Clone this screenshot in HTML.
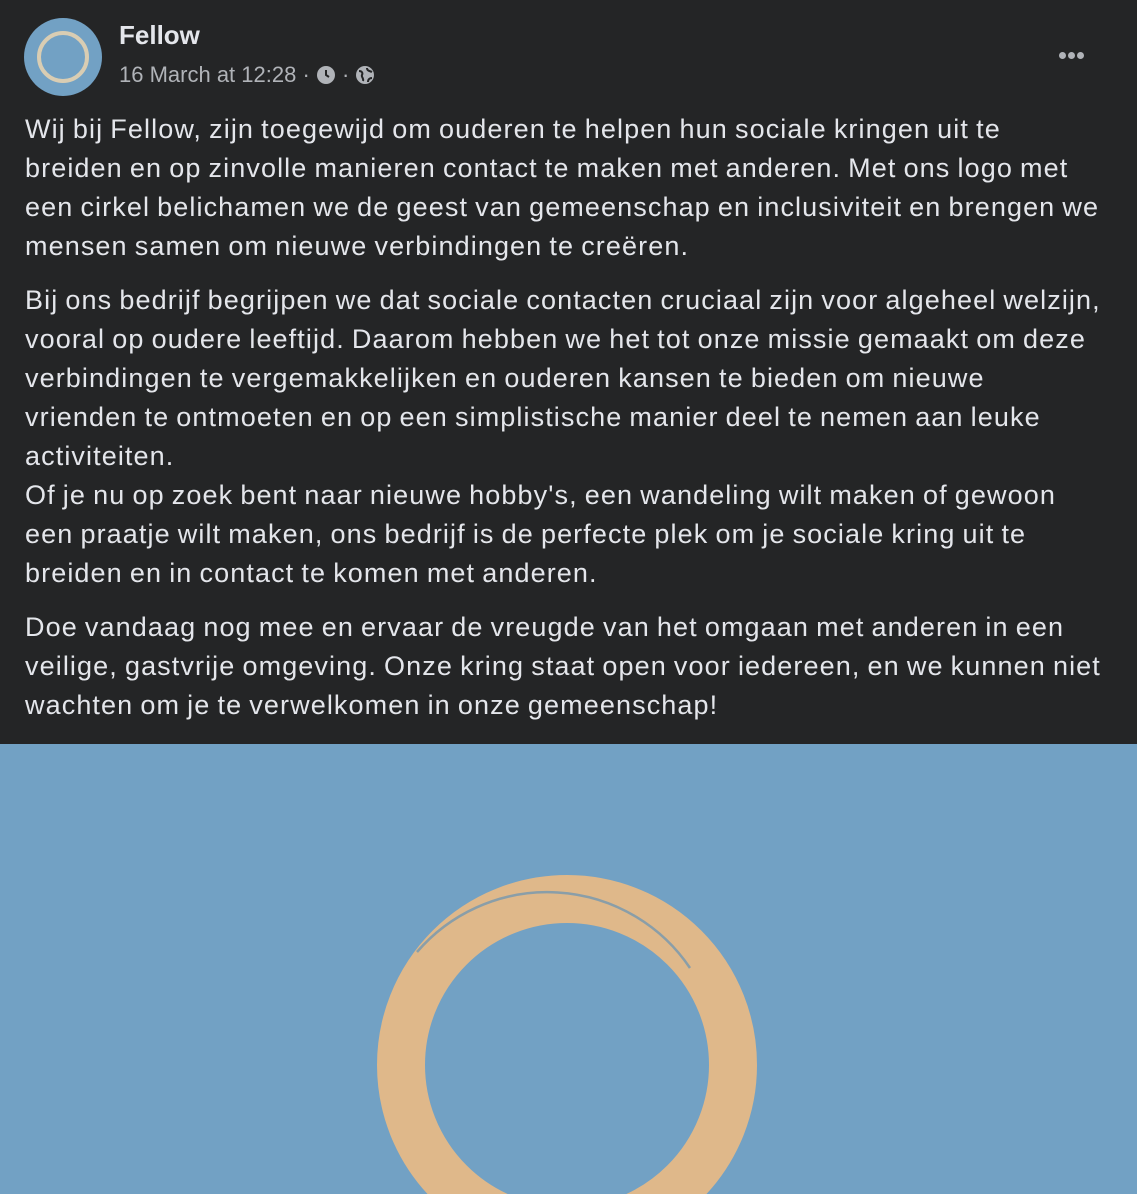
<!DOCTYPE html>
<html><head><meta charset="utf-8"><style>
body{margin:0;width:1137px;height:1194px;overflow:hidden;background:#72a1c4;font-family:"Liberation Sans",sans-serif}
.top{position:absolute;left:0;top:0;width:1137px;height:744px;background:#242526}
.av{position:absolute;left:24px;top:18px;width:78px;height:78px;border-radius:50%;background:#72a1c4}
.av:after{content:"";position:absolute;left:13px;top:13px;width:44px;height:44px;border-radius:50%;border:4px solid #d9cdb3}
.name{position:absolute;left:119px;top:20px;color:#e4e6eb;font-weight:bold;font-size:26px}
.date{position:absolute;left:119px;top:62px;color:#b0b3b8;font-size:22px}
.dots{position:absolute;left:1059px;top:46px}
.dots i{display:inline-block;width:7px;height:7px;border-radius:50%;background:#b0b3b8;margin-right:2px}
.txt{position:absolute;left:25px;top:110px;color:#e4e6eb;font-size:27px;letter-spacing:1.1px;word-spacing:-1.5px;line-height:39px;white-space:nowrap}
.txt p{margin:0 0 15px 0}
</style></head><body>
<div class="top">
<div class="av"></div>
<div class="name">Fellow</div>
<div class="date">16 March at 12:28 · <svg width="20" height="20" viewBox="0 0 20 20" style="vertical-align:-3px"><circle cx="10" cy="10" r="9" fill="#b0b3b8"/><path d="M10 5v5l3 2" stroke="#242526" stroke-width="2" fill="none"/></svg> · <svg width="20" height="20" viewBox="0 0 20 20" style="vertical-align:-3px"><circle cx="10" cy="10" r="9" fill="#b0b3b8"/><path d="M4 6c3 0 4 2 3 4s2 3 1 6M12 3c0 3 3 3 5 4M13 17c0-3 2-4 4-4" stroke="#242526" stroke-width="2" fill="none"/></svg></div>
<div class="dots"><i></i><i></i><i></i></div>
<div class="txt">
<p>Wij bij Fellow, zijn toegewijd om ouderen te helpen hun sociale kringen uit te<br>breiden en op zinvolle manieren contact te maken met anderen. Met ons logo met<br>een cirkel belichamen we de geest van gemeenschap en inclusiviteit en brengen we<br>mensen samen om nieuwe verbindingen te creëren.</p>
<p>Bij ons bedrijf begrijpen we dat sociale contacten cruciaal zijn voor algeheel welzijn,<br>vooral op oudere leeftijd. Daarom hebben we het tot onze missie gemaakt om deze<br>verbindingen te vergemakkelijken en ouderen kansen te bieden om nieuwe<br>vrienden te ontmoeten en op een simplistische manier deel te nemen aan leuke<br>activiteiten.<br>Of je nu op zoek bent naar nieuwe hobby's, een wandeling wilt maken of gewoon<br>een praatje wilt maken, ons bedrijf is de perfecte plek om je sociale kring uit te<br>breiden en in contact te komen met anderen.</p>
<p>Doe vandaag nog mee en ervaar de vreugde van het omgaan met anderen in een<br>veilige, gastvrije omgeving. Onze kring staat open voor iedereen, en we kunnen niet<br>wachten om je te verwelkomen in onze gemeenschap!</p>
</div>
</div>
<svg style="position:absolute;left:0;top:744px" width="1137" height="450">
<circle cx="567" cy="321" r="166" fill="none" stroke="#dfb88a" stroke-width="48"/>
<path d="M417 208 A172 172 0 0 1 690 224" fill="none" stroke="#8a9ea8" stroke-width="2.5"/>
</svg>
</body></html>
